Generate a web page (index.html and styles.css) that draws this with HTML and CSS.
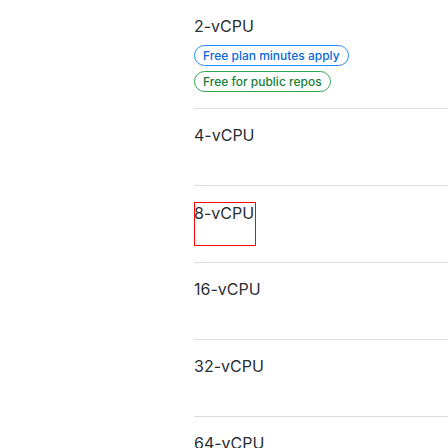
FILE: index.html
```html
<!DOCTYPE html>
<html lang="en">
<head>
<meta charset="utf-8">
<title>Runners</title>
<link rel="stylesheet" href="styles.css">
</head>
<body>
<div class="list">
  <div class="row">
    <div class="name">2-vCPU</div>
    <div class="badges">
      <span class="badge badge-blue">Free plan minutes apply</span>
      <span class="badge badge-green">Free for public repos</span>
    </div>
  </div>
  <div class="row"><div class="cell"><span class="name">4-vCPU</span></div></div>
  <div class="row"><div class="cell cell-focus"><span class="name">8-vCPU</span></div></div>
  <div class="row"><div class="cell"><span class="name">16-vCPU</span></div></div>
  <div class="row"><div class="cell"><span class="name">32-vCPU</span></div></div>
  <div class="row"><div class="cell"><span class="name">64-vCPU</span></div></div>
</div>
</body>
</html>
```
FILE: styles.css
```css
html, body {
  margin: 0;
  padding: 0;
  background: #ffffff;
}
body {
  font-family: Inter, "Liberation Sans", Arial, sans-serif;
  color: #2a2f35;
  overflow: hidden;
  height: 448px;
}
.list {
  margin-left: 194px;
}
.row {
  padding: 16px 0;
  border-bottom: 1px solid #d8dee4;
}
.name {
  display: block;
  font-size: 16px;
  line-height: 20px;
  font-weight: 400;
  white-space: nowrap;
}
.cell {
  display: inline-block;
  min-height: 44px;
  vertical-align: top;
}
.cell-focus {
  box-sizing: border-box;
  border: 1px solid #ff0000;
  height: 44px;
  padding-right: 1px;
}
.cell-focus .name {
  margin: 0 0 0 -1px;
}
.badges {
  display: flex;
  flex-direction: column;
  align-items: flex-start;
  gap: 5px;
  margin-top: 9px;
}
.badge {
  display: inline-block;
  box-sizing: border-box;
  height: 21px;
  line-height: 19px;
  padding: 0 8px;
  border: 1px solid;
  border-radius: 999px;
  font-size: 12px;
  font-weight: 500;
  white-space: nowrap;
}
.badge-blue {
  color: #0969da;
  border-color: #218bff;
}
.badge-green {
  color: #1a7f37;
  border-color: #2da44e;
}
```
